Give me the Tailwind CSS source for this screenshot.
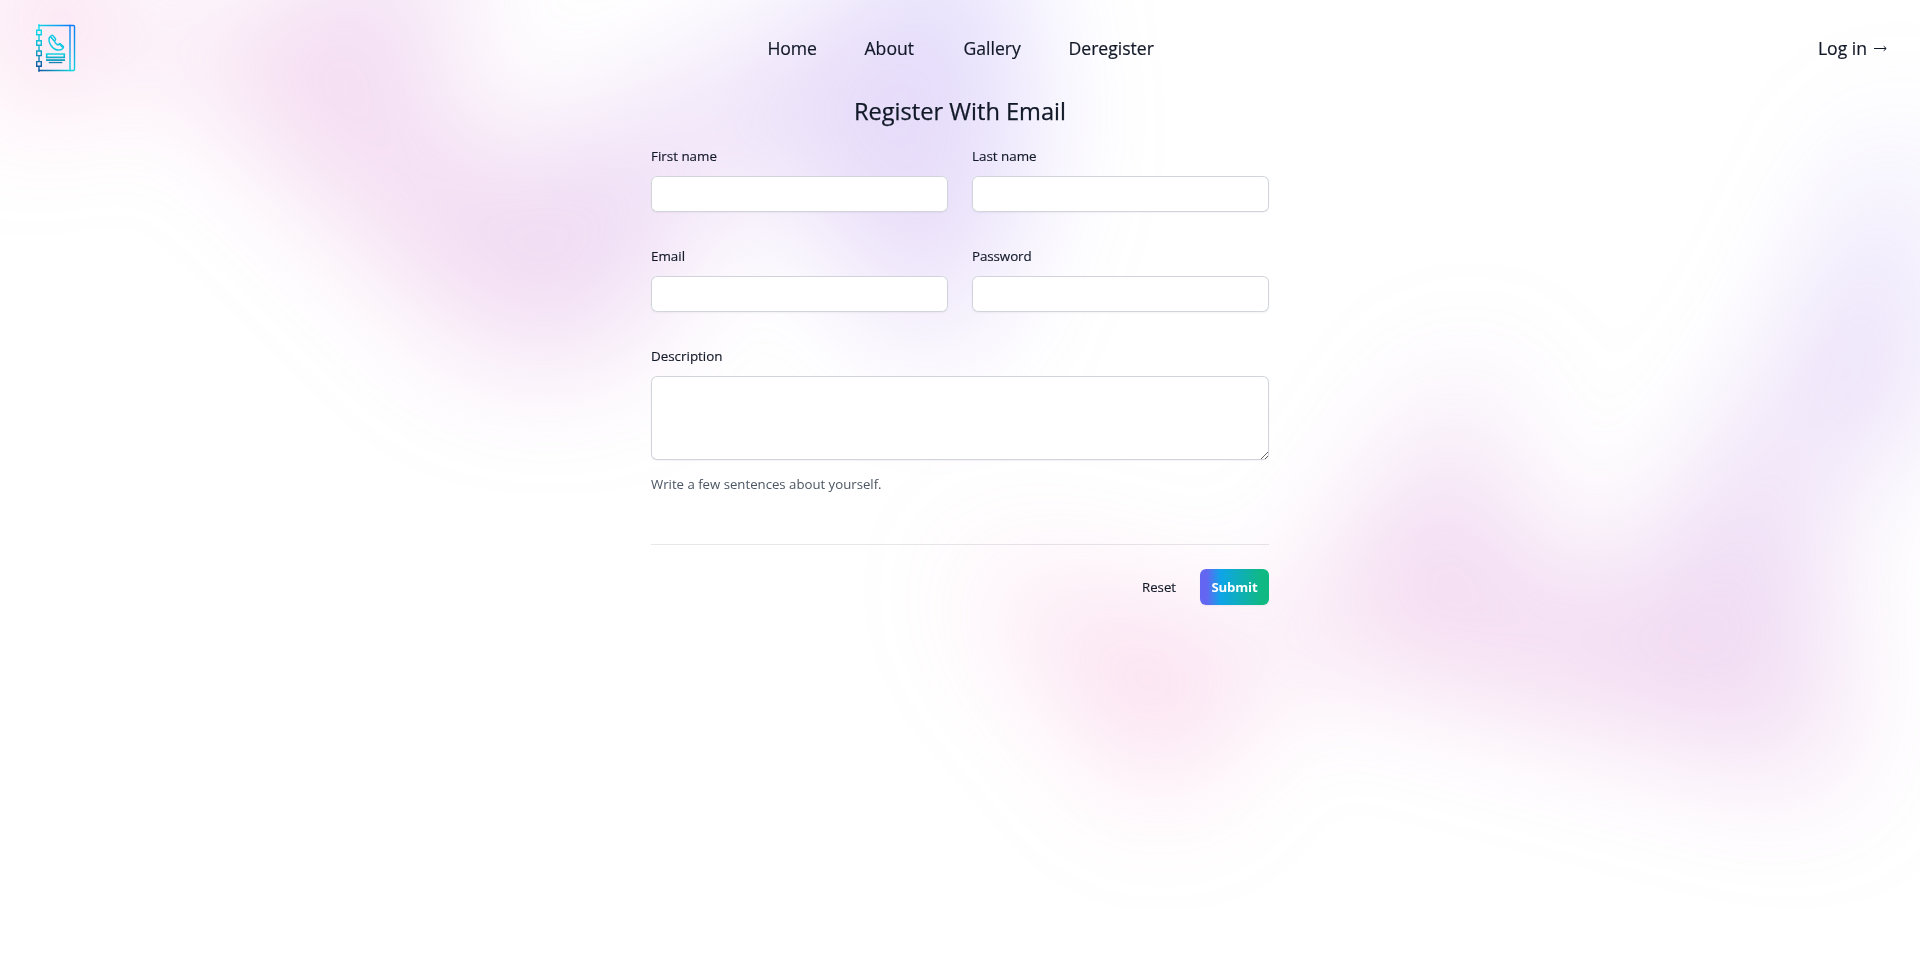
<!DOCTYPE html>
<html lang="en">
<head>
<meta charset="utf-8">
<title>Register</title>
<script src="https://cdn.jsdelivr.net/npm/@tailwindcss/browser@4"></script>
</head>
<body class="min-h-screen bg-white text-[#111827] font-['Open_Sans','Noto_Sans',sans-serif]">
<div class="relative isolate h-[605px]">
  <div class="absolute inset-x-0 -top-80 -z-10 transform-gpu overflow-hidden blur-3xl" aria-hidden="true">
    <div class="relative left-[calc(50%-30rem)] aspect-[1155/678] w-[72.1875rem] -translate-x-1/2 rotate-[30deg] bg-linear-to-tr/srgb from-[#ff80b5] to-[#9089fc] opacity-30 [clip-path:polygon(74.1%_44.1%,100%_61.6%,97.5%_26.9%,85.5%_0.1%,80.7%_2%,72.5%_32.5%,60.2%_62.4%,52.4%_68.1%,47.5%_58.3%,45.2%_34.5%,27.5%_76.7%,0.1%_64.9%,17.9%_100%,27.6%_76.8%,76.1%_97.7%,74.1%_44.1%)]"></div>
  </div>
  <div class="absolute inset-x-0 top-[calc(100%-30rem)] -z-10 transform-gpu overflow-hidden blur-3xl" aria-hidden="true">
    <div class="relative left-[calc(50%+36rem)] aspect-[1155/678] w-[72.1875rem] -translate-x-1/2 bg-linear-to-tr/srgb from-[#ff80b5] to-[#9089fc] opacity-30 [clip-path:polygon(74.1%_44.1%,100%_61.6%,97.5%_26.9%,85.5%_0.1%,80.7%_2%,72.5%_32.5%,60.2%_62.4%,52.4%_68.1%,47.5%_58.3%,45.2%_34.5%,27.5%_76.7%,0.1%_64.9%,17.9%_100%,27.6%_76.8%,76.1%_97.7%,74.1%_44.1%)]"></div>
  </div>
  <header>
    <nav class="flex h-24 items-center justify-between px-8 text-[17.6px] leading-7 [-webkit-text-stroke:0.2px]">
      <div class="flex flex-1">
        <svg class="size-12" viewBox="0 0 48 48" fill="none">
          <defs>
            <linearGradient id="b" gradientUnits="userSpaceOnUse" x1="0" y1="1" x2="0" y2="47"><stop offset="0" stop-color="#087cfb"/><stop offset=".45" stop-color="#149be8"/><stop offset="1" stop-color="#0fd5e0"/></linearGradient>
            <linearGradient id="c" gradientUnits="userSpaceOnUse" x1="0" y1="6" x2="0" y2="43"><stop offset="0" stop-color="#10dcec"/><stop offset=".5" stop-color="#11afcc"/><stop offset="1" stop-color="#0d58a0"/></linearGradient>
            <linearGradient id="d" gradientUnits="userSpaceOnUse" x1="0" y1="29" x2="0" y2="40"><stop offset="0" stop-color="#14dbe4"/><stop offset="1" stop-color="#0f72a8"/></linearGradient>
            <linearGradient id="t" gradientUnits="userSpaceOnUse" x1="7" y1="0" x2="38" y2="0"><stop offset="0" stop-color="#14d4e4"/><stop offset="1" stop-color="#087cfb"/></linearGradient>
            <linearGradient id="u" gradientUnits="userSpaceOnUse" x1="7" y1="0" x2="38" y2="0"><stop offset="0" stop-color="#0d58a0"/><stop offset="1" stop-color="#0fd0dc"/></linearGradient>
          </defs>
          <path d="M38 1.500V1.510H7V1.500z" stroke="url(#t)" stroke-width="1.4"/>
          <path d="M7 1h.01v46H7z" stroke="url(#c)" stroke-width="1.400"/>
          <path d="M7 46.500V46.510H38V46.500z" stroke="url(#u)" stroke-width="1.400"/>
          <path d="M38 1.500h3.500a1 1 0 0 1 1 1v43a1 1 0 0 1-1 1H38zM38 1v46" stroke="url(#b)" stroke-width="1.400"/>
          <path d="M4.700 6.200h4.600v4.600H4.700zM4.700 16.700h4.600v4.600H4.700zM4.700 27h4.600v4.600H4.700zM4.700 37.600h4.600v4.600H4.700z" fill="#fbeaf5" stroke="url(#c)" stroke-width="1.400"/>
          <path d="M19.300 11.700l-1.800 1.700c-2 4.600 2.900 12.700 9.500 12.700 1.900 0 3.300-.8 4.300-2.200.4-.6.300-1.100-.2-1.600l-2.500-2.300c-.5-.5-1.100-.4-1.600 0l-1 1c-1.800-.8-3-2.200-3.700-4l1-1c.4-.5.4-1 0-1.600l-2.300-2.600c-.5-.6-1.100-.6-1.700-.1zM18.600 12.700l3.200 3.800M27.600 20.200l3.200 3.200" stroke="#12c8e2" stroke-width="1.500"/>
          <path d="M14.700 30h17.600v3.400H14.700z" stroke="url(#d)" stroke-width="1.600"/>
          <path d="M14 35.200h19v1.800H14z" fill="#139fc0"/><path d="M16.800 37.900h13.500v1.300H16.800z" fill="#1784b4"/>
        </svg>
      </div>
      <div class="flex gap-x-12">
        <a href="#" class="w-[50px] pl-px whitespace-nowrap tracking-[-0.1px]">Home</a>
        <a href="#" class="w-[50px] whitespace-nowrap">About</a>
        <a href="#" class="w-[58px] pl-px whitespace-nowrap">Gallery</a>
        <a href="#" class="w-[85px] whitespace-nowrap">Deregister</a>
      </div>
      <div class="flex flex-1 justify-end">
        <a href="#" class="flex items-center gap-[7px] whitespace-nowrap">Log in
          <svg class="h-3 w-[14px]" viewBox="0 0 14 12" fill="none" stroke="currentColor" stroke-width="1"><path d="M0 6.500h12M9.700 4.200L12.200 6.500 9.700 8.800"/></svg></a>
      </div>
    </nav>
  </header>
  <form class="mx-auto w-[618px]">
    <h2 class="text-center text-[23.6px] leading-[30px] whitespace-nowrap [-webkit-text-stroke:0.25px]">Register With Email</h2>
    <div class="mt-[18px] grid grid-cols-2 gap-x-6 gap-y-8 text-[13.4px] leading-6">
      <label class="block"><span class="[-webkit-text-stroke:0.15px]">First name</span><input type="text" class="mt-2 block h-9 w-full rounded-md bg-white px-3 shadow-xs ring-1 ring-[#d1d5db] ring-inset"></label>
      <label class="block"><span class="[-webkit-text-stroke:0.15px]">Last name</span><input type="text" class="mt-2 block h-9 w-full rounded-md bg-white px-3 shadow-xs ring-1 ring-[#d1d5db] ring-inset"></label>
      <label class="block"><span class="[-webkit-text-stroke:0.15px]">Email</span><input type="email" class="mt-2 block h-9 w-full rounded-md bg-white px-3 shadow-xs ring-1 ring-[#d1d5db] ring-inset"></label>
      <label class="block"><span class="tracking-[-0.1px] [-webkit-text-stroke:0.15px]">Password</span><input type="password" class="mt-2 block h-9 w-full rounded-md bg-white px-3 shadow-xs ring-1 ring-[#d1d5db] ring-inset"></label>
      <div class="col-span-2">
        <label for="description" class="[-webkit-text-stroke:0.15px]">Description</label>
        <textarea id="description" class="mt-2 block h-[84px] w-full rounded-md bg-white px-3 shadow-xs ring-1 ring-[#d1d5db] ring-inset"></textarea>
        <p class="mt-3 text-[13.2px] leading-6 text-[#4b5563]">Write a few sentences about yourself.</p>
      </div>
    </div>
    <div class="mt-12 flex items-center justify-end gap-x-6 border-t border-[#111827]/10 pt-6 text-[13.2px] leading-6">
      <button type="button" class="[-webkit-text-stroke:0.15px]">Reset</button>
      <button type="button" class="h-9 w-[69px] rounded-md bg-linear-to-r/srgb from-[#6366f1] from-10% via-[#0ea5e9] via-30% to-[#10b981] to-90% text-center font-bold tracking-[-0.15px] text-white shadow-xs">Submit</button>
    </div>
  </form>
</div>
</body>
</html>
